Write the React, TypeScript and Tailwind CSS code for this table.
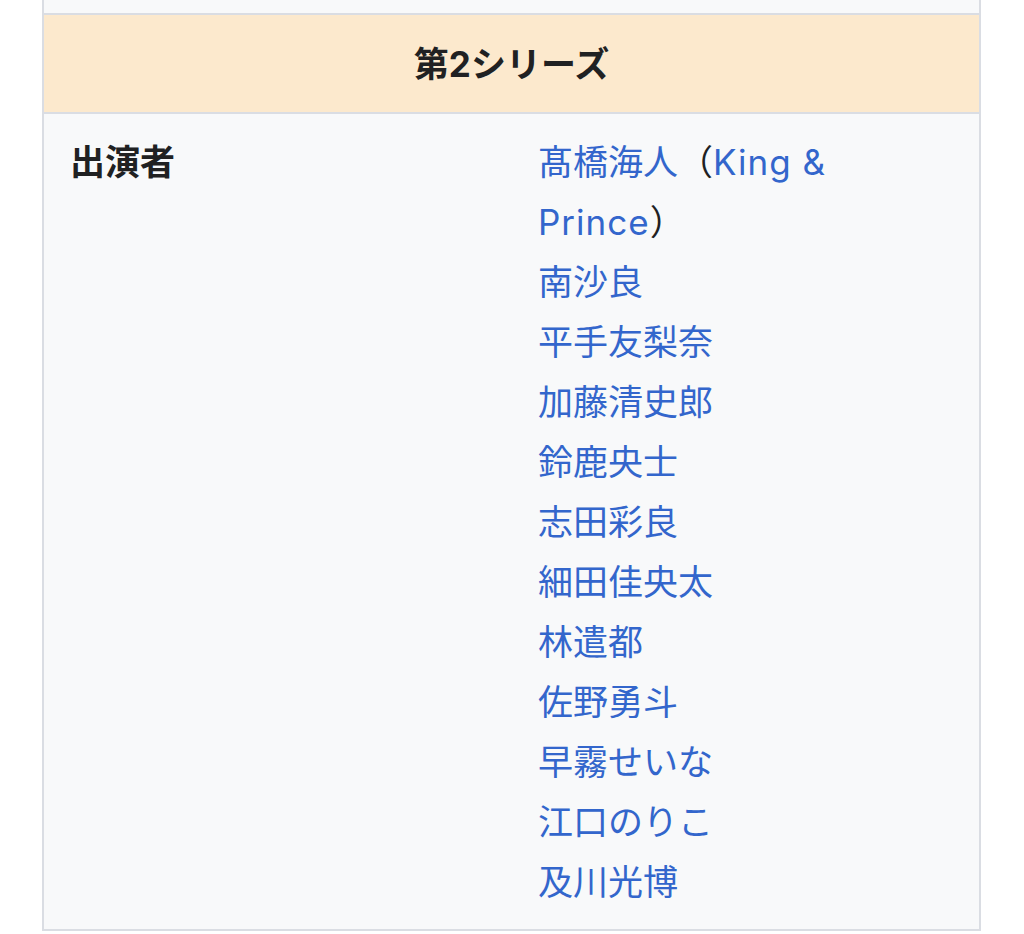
import React from "react";

const cast: string[] = [
  "南沙良",
  "平手友梨奈",
  "加藤清史郎",
  "鈴鹿央士",
  "志田彩良",
  "細田佳央太",
  "林遣都",
  "佐野勇斗",
  "早霧せいな",
  "江口のりこ",
  "及川光博",
];

export default function App() {
  return (
    <div
      className="min-h-[934px] bg-white pl-[42px] pr-[43px] text-[#202122]"
      style={{ fontFamily: 'Inter, "Noto Sans CJK JP", sans-serif' }}
    >
      <div className="border-x-2 border-[#dadde3]">
        <div className="h-[13px] bg-[#f8f9fa]" />
        <div className="border-y-2 border-[#dadde3] bg-[#fce9cd] pt-[19px] pb-[18px] text-center text-[35px] leading-[60px] font-bold">
          第2シリーズ
        </div>
        <div className="flex border-b-2 border-[#dadde3] bg-[#f8f9fa] pt-[18px] pb-[17px] text-[35px] leading-[60px]">
          <div className="w-[468px] shrink-0 pl-[26px] font-bold">出演者</div>
          <div className="pl-[26px]">
            <div className="w-[330px]">
              <a className="text-[#3366cc]">髙橋海人</a>
              <span>（</span>
              <a className="text-[#3366cc] tracking-[1px]">King &amp; Prince</a>
              <span>）</span>
            </div>
            {cast.map((n) => (
              <div key={n}>
                <a className="text-[#3366cc]">{n}</a>
              </div>
            ))}
          </div>
        </div>
      </div>
    </div>
  );
}
